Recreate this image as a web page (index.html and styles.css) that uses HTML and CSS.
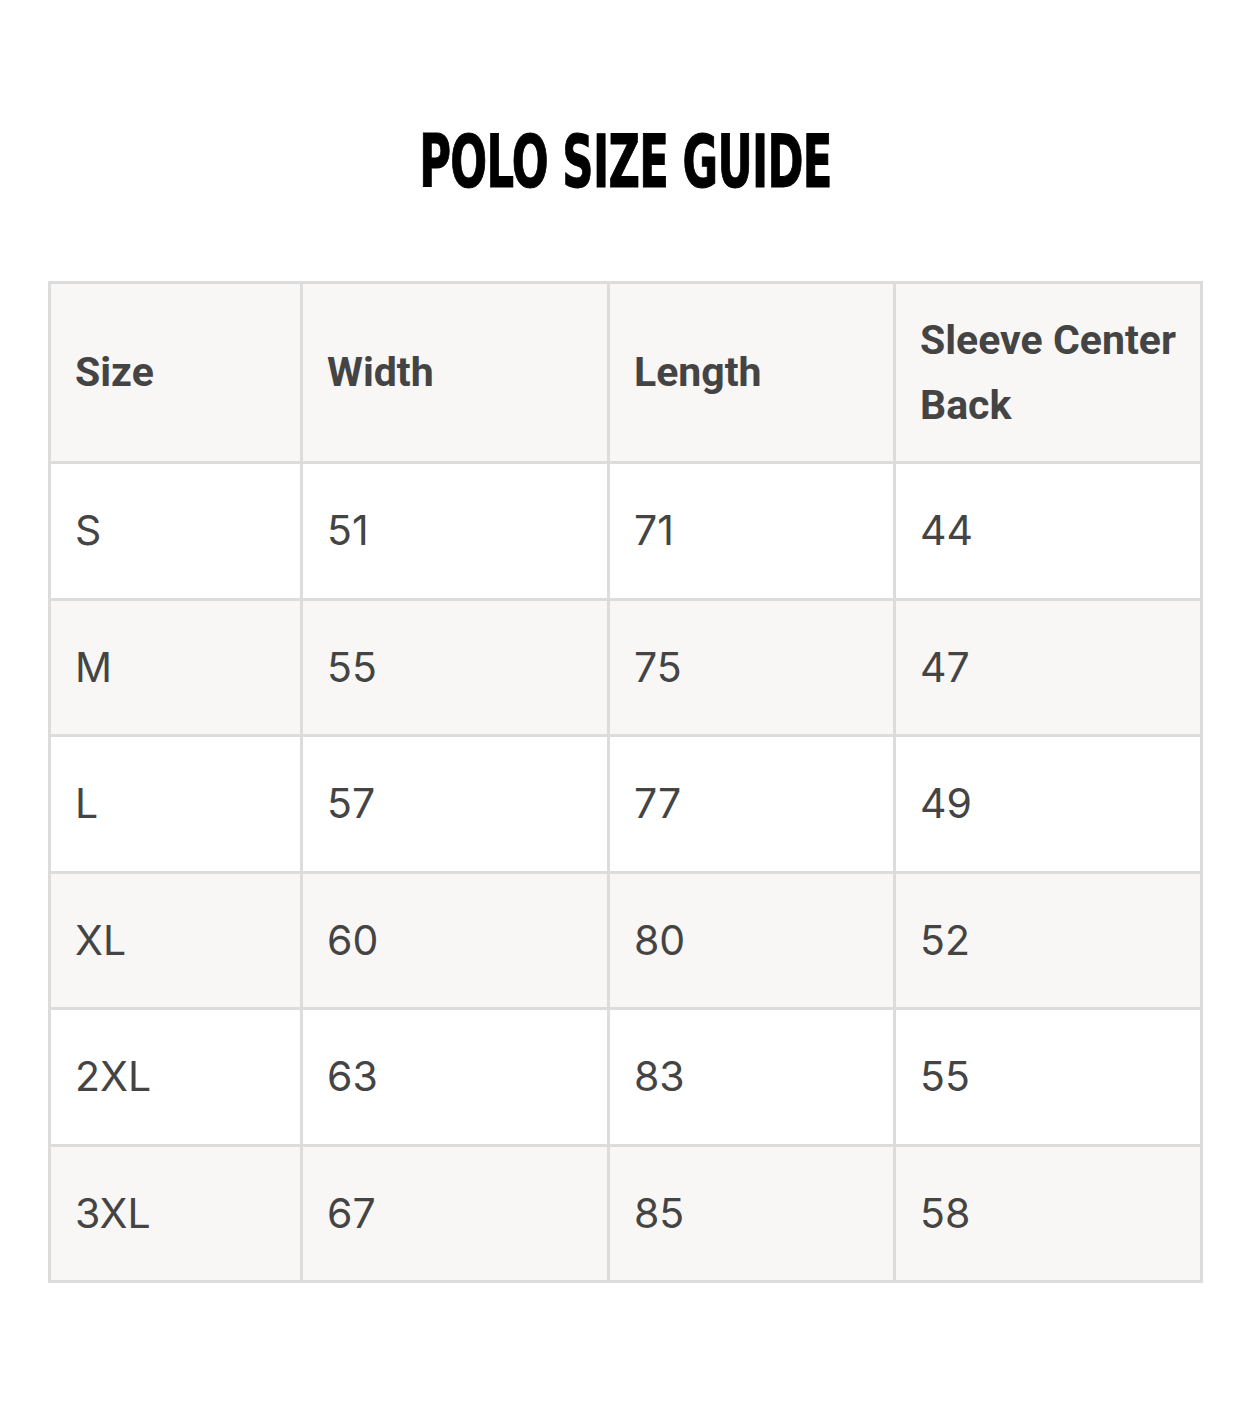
FILE: index.html
```html
<!DOCTYPE html>
<html lang="en">
<head>
<meta charset="utf-8">
<title>Polo Size Guide</title>
<link rel="stylesheet" href="styles.css">
</head>
<body>
<main class="page">
  <h1 class="title"><span class="title-text">POLO SIZE GUIDE</span></h1>
  <table class="size-table">
    <colgroup>
      <col class="c1"><col class="c2"><col class="c3"><col class="c4">
    </colgroup>
    <thead>
      <tr>
        <th>Size</th>
        <th>Width</th>
        <th>Length</th>
        <th class="last">Sleeve Center Back</th>
      </tr>
    </thead>
    <tbody>
      <tr><td>S</td><td>51</td><td>71</td><td>44</td></tr>
      <tr class="alt"><td>M</td><td>55</td><td>75</td><td>47</td></tr>
      <tr><td>L</td><td>57</td><td>77</td><td>49</td></tr>
      <tr class="alt"><td>XL</td><td>60</td><td>80</td><td>52</td></tr>
      <tr><td>2XL</td><td>63</td><td>83</td><td>55</td></tr>
      <tr class="alt"><td>3XL</td><td>67</td><td>85</td><td>58</td></tr>
    </tbody>
  </table>
</main>
</body>
</html>
```

FILE: styles.css
```css
html, body {
  margin: 0;
  padding: 0;
  background: #ffffff;
}

.page {
  padding: 0 48px;
  font-family: Inter, "Open Sans", "Liberation Sans", sans-serif;
  color: #444444;
}

.title {
  margin: 0;
  padding-top: 118px;
  height: 281px;
  box-sizing: border-box;
  text-align: center;
  font-family: "DejaVu Sans Condensed", "DejaVu Sans", sans-serif;
  font-stretch: condensed;
  font-weight: 700;
  font-size: 73px;
  line-height: 88px;
  color: #000000;
}

.title-text {
  display: inline-block;
  transform: scaleX(0.66);
  letter-spacing: -1px;
  -webkit-text-stroke: 1px #000000;
}

.size-table {
  width: 1152px;
  border-collapse: collapse;
  border: 3px solid #dcdcdc;
  table-layout: fixed;
}

.c1 { width: 252px; }
.c2 { width: 307px; }
.c3 { width: 286px; }
.c4 { width: 307px; }

.size-table th,
.size-table td {
  border: 3px solid #dcdcdc;
  text-align: left;
  vertical-align: middle;
  padding: 0 24px;
  line-height: 65px;
}

.size-table th {
  background: #f8f7f5;
  font-family: Roboto, "Liberation Sans", sans-serif;
  font-weight: 700;
  font-size: 41px;
  height: 177px;
  letter-spacing: 0;
}

.size-table th.last {
  padding-right: 4px;
}

.size-table td {
  font-weight: 400;
  font-size: 41px;
  height: 133.5px;
  background: #ffffff;
}

.size-table tr.alt td {
  background: #f8f7f5;
}
```
